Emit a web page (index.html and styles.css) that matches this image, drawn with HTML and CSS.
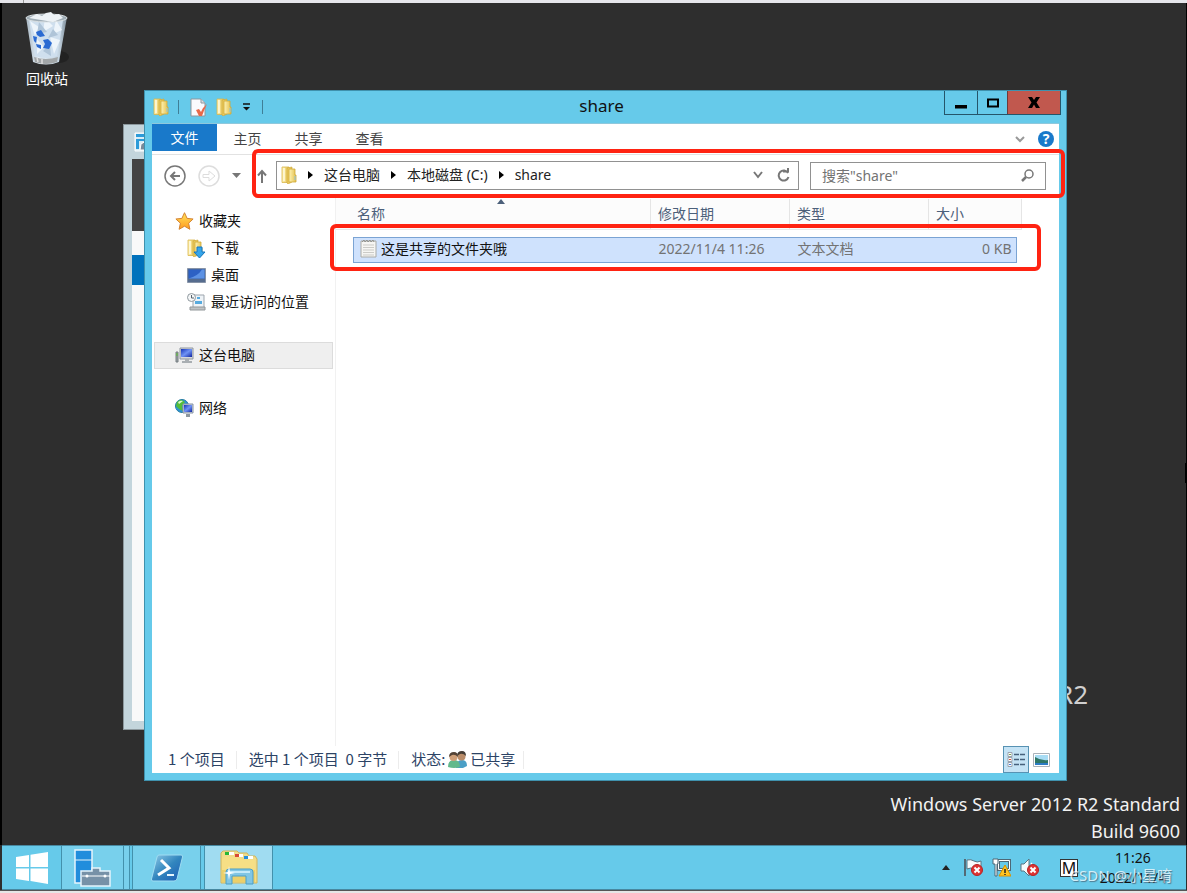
FILE: index.html
```html
<!DOCTYPE html>
<html lang="zh-CN">
<head>
<meta charset="utf-8">
<title>share</title>
<link rel="stylesheet" href="styles.css">
</head>
<body>
<svg class="defs" aria-hidden="true">
  <defs>
    <linearGradient id="gFolder" x1="0" x2="1"><stop offset="0" stop-color="#fff3b4"/><stop offset="1" stop-color="#e3c04e"/></linearGradient>
    <linearGradient id="gScreen" x1="0" y1="0" x2="1" y2="1"><stop offset="0" stop-color="#1533b8"/><stop offset=".5" stop-color="#6f93f5"/><stop offset="1" stop-color="#1024a0"/></linearGradient>
    <linearGradient id="gPs" x1="0" y1="0" x2="1" y2="1"><stop offset="0" stop-color="#8fcbe8"/><stop offset=".5" stop-color="#3286be"/><stop offset="1" stop-color="#1c59b4"/></linearGradient>
    <linearGradient id="gGlass" x1="0" x2="1"><stop offset="0" stop-color="#a9b8c4"/><stop offset=".3" stop-color="#e3edf5"/><stop offset=".8" stop-color="#c5d5e2"/><stop offset="1" stop-color="#7f8e9a"/></linearGradient>
    <linearGradient id="gStar" x1="0" y1="0" x2="0" y2="1"><stop offset="0" stop-color="#ffe45c"/><stop offset="1" stop-color="#ff9a1f"/></linearGradient>
    <symbol id="folder" viewBox="0 0 16 18">
      <path d="M1 1h7v15.500H1z" fill="url(#gFolder)" stroke="#d9b64c" stroke-width=".8"/>
      <path d="M6 2l5-1v15l-4 2-1-1z" fill="#e9c95c" stroke="#cda536" stroke-width=".6"/>
      <path d="M8 3h6v6h1v7H8z" fill="url(#gFolder)" stroke="#cfa937" stroke-width=".8"/>
      <path d="M3 2v13" stroke="#fffbe0" stroke-width="1.500"/><path d="M14 10v4" stroke="#8fc3dd" stroke-width="1"/>
    </symbol>
    <symbol id="badge" viewBox="0 0 12 12">
      <circle cx="6" cy="6" r="5.500" fill="#de3434" stroke="#b82222"/><path d="M3.500 3.500l5 5m0-5l-5 5" stroke="#fff" stroke-width="2"/>
    </symbol>
  </defs>
</svg>
<div class="topedge"></div>
<main class="desktop">
  <div class="bin">
    <svg width="44" height="54" viewBox="0 0 44 54" aria-hidden="true">
      <ellipse cx="34" cy="45" rx="10" ry="6" fill="#222"/>
      <path d="M1 5l7 45q13 5 26 0L42 5z" fill="url(#gGlass)"/>
      <path d="M4 8l6 36q12 4 22 0l6-36z" fill="#cfdfee"/>
      <path d="M5 9l9 6-4 9zM20 6l8 8-10 6zM31 8l6 10-9 4zM12 27l7 8-7 7zM25 25l10 3-6 14z" fill="#eef5fb"/>
      <path d="M14 10l8 10-10 2zM28 17l-5 9 10-3zM18 39l7-7 1 12z" fill="#afc4d8"/>
      <path d="M9 45q12 4 24 0l-1 5q-11 4-22 0z" fill="#a2a6a8"/>
      <path d="M12 46l1 4m4-3v5" stroke="#dedede" stroke-width="1.500"/>
      <ellipse cx="21.500" cy="6" rx="20.500" ry="4" fill="#9fadb6" stroke="#d9dfe2"/>
      <path d="M4 6l8-4 5 2 4-3 5-1 3 3 5-1 4 4-10 4-12-2z" fill="#edf2f6"/>
      <path d="M11 20l5-2 4 6-5 1-3-2zM8 24l4 1-1 6-2-2zM11 32l5 1v4l-4-2zM18 28l5-1 4 4-3 6-6-1 2-4z" fill="#2a6ad2"/>
    </svg>
    <span>回收站</span>
  </div>
  <div class="brand">R2</div>
  <div class="build"><span>Windows Server 2012 R2 Standard</span><span>Build 9600</span></div>
  <div class="edgemark"></div>

  <div class="backwin">
    <div class="back-title">
      <svg width="16" height="20" viewBox="0 0 16 20" aria-hidden="true"><path d="M1 1h15v18H1z" fill="#d8edf6" stroke="#fff"/><path d="M2 2h14v3H2zM2 7h14v2H5v8H2z" fill="#2c9bd8"/><path d="M7 12l5-3h4v9H6z" fill="#788a99" stroke="#fff"/></svg>
    </div>
    <div class="back-dark"></div><div class="back-gap"></div><div class="back-blue"></div><div class="back-body"></div>
  </div>

  <section class="window" aria-label="share">
    <header class="titlebar">
      <div class="quick">
        <svg width="16" height="18"><use href="#folder"/></svg>
        <i class="qsep"></i>
        <svg class="prop" width="18" height="19" viewBox="0 0 18 19" aria-hidden="true"><path d="M1 1h10l4 4v13H1z" fill="#fafafd" stroke="#8f979e"/><path d="M11 1v4h4" fill="#d9dee3" stroke="#8f979e"/><path d="M6 12l3-1 2 3q2-5 6-8-3 6-5 12H9z" fill="#e8694a"/></svg>
        <svg width="16" height="18"><use href="#folder"/></svg>
        <svg class="qmenu" width="9" height="8" viewBox="0 0 9 8" aria-hidden="true"><path d="M1 1h7" stroke="#111" stroke-width="1.500"/><path d="M1 4h7L4.500 7.500z" fill="#111"/></svg>
        <i class="qsep"></i>
      </div>
      <h1>share</h1>
      <div class="caption">
        <button class="cap-min" aria-label="最小化"><svg width="14" height="12" viewBox="0 0 14 12"><path d="M1 8h12v3.500H1z"/></svg></button>
        <button class="cap-max" aria-label="最大化"><svg width="12" height="10" viewBox="0 0 12 10"><path d="M1 1.500h10v7H1z" fill="none" stroke="#000" stroke-width="2"/></svg></button>
        <button class="cap-close" aria-label="关闭"><svg width="12" height="11" viewBox="0 0 12 11"><path d="M0 0h4l2 3 2-3h4L8.500 5.500 12 11H8L6 7.500 4 11H0l3.500-5.500z"/></svg></button>
      </div>
    </header>
    <div class="client">
      <nav class="tabs">
        <button class="tab file">文件</button><button class="tab">主页</button><button class="tab">共享</button><button class="tab">查看</button>
        <div class="tab-end">
          <svg width="10" height="7" viewBox="0 0 10 7" aria-hidden="true"><path d="M1 1l4 4 4-4" fill="none" stroke="#999" stroke-width="2"/></svg>
          <button class="help" aria-label="帮助">?</button>
        </div>
      </nav>
      <div class="navrow">
        <div class="arrows">
          <svg width="22" height="22" viewBox="0 0 22 22" aria-hidden="true"><circle cx="11" cy="11" r="10" fill="#fff" stroke="#777" stroke-width="1.500"/><path d="M16 11H7m4-4l-4 4 4 4" fill="none" stroke="#777" stroke-width="2"/></svg>
          <svg width="22" height="22" viewBox="0 0 22 22" aria-hidden="true"><circle cx="11" cy="11" r="10" fill="#fff" stroke="#ddd" stroke-width="1.500"/><path d="M5 9.500h6V6l6 5-6 5v-3.500H5z" fill="none" stroke="#ddd"/></svg>
          <svg width="9" height="5" viewBox="0 0 9 5" aria-hidden="true"><path d="M0 0h9L4.500 5z" fill="#777"/></svg>
          <svg width="10" height="14" viewBox="0 0 10 14" aria-hidden="true"><path d="M5 14V2M1 6.500L5 2l4 4.500" fill="none" stroke="#777" stroke-width="2"/></svg>
        </div>
        <div class="address">
          <svg width="16" height="18"><use href="#folder"/></svg>
          <svg width="5" height="8" viewBox="0 0 5 8"><path d="M0 0l5 4-5 4z"/></svg><span>这台电脑</span>
          <svg width="5" height="8" viewBox="0 0 5 8"><path d="M0 0l5 4-5 4z"/></svg><span>本地磁盘 (C:)</span>
          <svg width="5" height="8" viewBox="0 0 5 8"><path d="M0 0l5 4-5 4z"/></svg><span>share</span>
          <svg class="addr-drop" width="10" height="8" viewBox="0 0 10 8"><path d="M1 1l4 5 4-5" fill="none" stroke="#777" stroke-width="2"/></svg>
          <svg width="13" height="14" viewBox="0 0 13 14"><path d="M11 5a5 5 0 1 0 .5 4M6 3.500h5V0" fill="none" stroke="#777" stroke-width="2"/></svg>
        </div>
        <label class="search">
          <input type="text" aria-label="搜索" value="搜索&quot;share&quot;">
          <svg width="13" height="13" viewBox="0 0 13 13" aria-hidden="true"><circle cx="8" cy="5" r="4" fill="none" stroke="#777" stroke-width="1.500"/><path d="M5 8L1 12" stroke="#777" stroke-width="2.500"/></svg>
        </label>
      </div>
      <div class="content">
        <aside class="side">
          <div class="group">
            <a class="root" href="#"><svg width="19" height="18" viewBox="0 0 19 18"><path d="M9.500.7l2.600 5.700 6 .6-4.500 4.200 1.300 6.100-5.400-3.100-5.400 3.100 1.300-6.100L.9 7l6-.6z" fill="url(#gStar)" stroke="#d48330"/></svg>收藏夹</a>
            <a href="#"><svg width="19" height="19" viewBox="0 0 19 19"><use href="#folder" width="16" height="18"/><path d="M10 8h5v5h3l-5.500 6L7 13h3z" fill="#35a5ea" stroke="#1677bd"/></svg>下载</a>
            <a href="#"><svg width="19" height="15" viewBox="0 0 19 15"><path d="M.5.500h18v14H.5z" fill="#566c8e" stroke="#8794a8"/><path d="M1.500 1.500h16v9h-16z" fill="#2d61c4"/><path d="M1.500 10.500Q11 8 15 1.500h2.500v9z" fill="#5d92e4"/></svg>桌面</a>
            <a href="#"><svg width="19" height="18" viewBox="0 0 19 18"><path d="M6 2h11v14H6z" fill="#eef3f7" stroke="#9da5ad"/><path d="M3 14h15v3H3z" fill="#bfc3c5" stroke="#92979a"/><path d="M10 4h3v2h-3zM8 8h7v3H8z" fill="#56aade"/><circle cx="4.500" cy="4.500" r="4" fill="#f4f6f7" stroke="#8f989e"/><path d="M4.500 2v3H7" fill="none" stroke="#59636b"/></svg>最近访问的位置</a>
          </div>
          <div class="group">
            <a class="root selected" href="#"><svg width="19" height="17" viewBox="0 0 19 17"><path d="M1 5h2v10H1z" fill="#9aa2a6" stroke="#777e82"/><path d="M2 6v3" stroke="#57c12e"/><path d="M5 1h13v11H5z" fill="#d4d7dc" stroke="#8f969f"/><path d="M6 2h11v8H6z" fill="url(#gScreen)"/><path d="M10 12h4v2h3v2H7v-2h3z" fill="#a9aeb2"/></svg>这台电脑</a>
          </div>
          <div class="group">
            <a class="root" href="#"><svg width="19" height="19" viewBox="0 0 19 19"><circle cx="7" cy="7" r="6.500" fill="#2d93d7" stroke="#247b9f"/><path d="M2 3q4-4 8 0L7 7l1 5-4-2-3-3z" fill="#54bd39"/><path d="M3 3q3-2 5-1L4 5z" fill="#ddf8d0"/><path d="M8 5h10v9H8z" fill="#c9d1dc" stroke="#8793a3"/><path d="M9 6h8v7H9z" fill="url(#gScreen)"/><path d="M11 15h4v3h-4z" fill="#8d979f"/></svg>网络</a>
          </div>
        </aside>
        <div class="files">
          <table>
            <colgroup><col><col class="c-date"><col class="c-type"><col class="c-size"></colgroup>
            <thead><tr><th>名称<i class="sort"></i></th><th>修改日期</th><th>类型</th><th>大小</th></tr></thead>
            <tbody><tr>
              <td><div class="cell first"><svg width="17" height="19" viewBox="0 0 17 19"><path d="M1 2h15v16H1z" fill="#f6f6f3" stroke="#a9aaa6"/><path d="M3 6h11M3 8.500h11M3 11h11M3 13.500h11M3 16h11" stroke="#cbcbc7"/><path d="M2 3l2-2 1 2 2-2 1 2 2-2 1 2 2-2 1 2" fill="none" stroke="#93948f"/></svg>这是共享的文件夹哦</div></td>
              <td><div class="cell">2022/11/4 11:26</div></td>
              <td><div class="cell">文本文档</div></td>
              <td><div class="cell last">0 KB</div></td>
            </tr></tbody>
          </table>
        </div>
      </div>
      <footer class="status">
        <span>1 个项目</span><span>选中 1 个项目&nbsp; 0 字节</span>
        <span class="shared">状态:<svg width="19" height="17" viewBox="0 0 19 17"><path d="M8 17q0-8 6-8 5 0 5 6l-4 2z" fill="#4a9fc6"/><circle cx="13.500" cy="5.500" r="4" fill="#b98c69"/><path d="M9 5q0-5 5-5 4 0 4 5-3-3-6-2z" fill="#443c35"/><path d="M0 16q0-7 6-7t6 7q-6 2-12 0z" fill="#62b98c"/><circle cx="5.500" cy="6" r="4" fill="#cf9f78"/><path d="M1 6q0-5 5-5 4 0 4 5-3-3-6-2z" fill="#544336"/></svg>已共享</span>
        <div class="views">
          <button class="on" aria-label="详细信息"><svg width="19" height="16" viewBox="0 0 19 16"><g fill="#fff" stroke="#9aa3ae"><path d="M1 .500h4v4H1zM1 5.500h4v4H1zM1 10.500h4v4H1z"/></g><path d="M2 7h2v1H2z" fill="#e0523c"/><path d="M2 12h2v1H2z" fill="#3f7be0"/><path d="M2 2h2v1H2z" fill="#79a04f"/><path d="M7 2.500h5m1 0h5M7 7.500h5m1 0h5M7 12.500h5m1 0h5" stroke="#47617c" stroke-width="1.500"/></svg></button>
          <button aria-label="大图标"><svg width="17" height="14" viewBox="0 0 17 14"><path d="M.5.500h16v13H.5z" fill="#fff" stroke="#a9b1b9"/><path d="M2 2h13v10H2z" fill="#a8dcf4"/><path d="M2 4q6 4 13 3v3H2z" fill="#2e7666"/><path d="M2 10h13v2H2z" fill="#2c7cc5"/></svg></button>
        </div>
      </footer>
    </div>
    <div class="mark mark-address"></div>
    <div class="mark mark-file"></div>
  </section>
</main>
<footer class="taskbar">
  <button class="start" aria-label="开始"><svg width="32" height="32" viewBox="0 0 32 32"><path d="M0 5l13-2v12H0zM14.500 2.700L32 0v15H14.500zM0 16.500h13V29L0 27zM14.500 16.500H32V32l-17.500-3z" fill="#fff"/></svg></button>
  <button class="task server" aria-label="服务器管理器"><svg width="38" height="38" viewBox="0 0 38 38"><path d="M1 1h17v33H1z" fill="#218ddc" stroke="#e5f4fb" stroke-width="1.500"/><path d="M1 11h17" stroke="#e5f4fb"/><path d="M18 22v-3h8v3h10v15H7V22z" fill="#7791a7" stroke="#e5f4fb" stroke-width="1.500"/><path d="M8 27h28" stroke="#fff"/><circle cx="13" cy="27" r="1.500" fill="#fff"/><circle cx="31" cy="27" r="1.500" fill="#fff"/></svg></button>
  <i class="stack"></i>
  <button class="task" aria-label="PowerShell"><svg width="32" height="28" viewBox="0 0 32 28"><path d="M8 1h22q2 0 1.500 2L26 25q-1 2-3 2H2q-2 0-1.500-2L6 3q.5-2 2-2z" fill="url(#gPs)" stroke="#9fdcf2"/><path d="M10 6l8 8-11 7" fill="none" stroke="#fff" stroke-width="3"/><path d="M16 21h7" stroke="#e7f5fc" stroke-width="2"/></svg></button>
  <button class="task active" aria-label="文件资源管理器"><svg width="38" height="35" viewBox="0 0 38 35"><path d="M1 3l2-2h14l2 2h8l2 3h6l2 3v24H1z" fill="#f0dc8a" stroke="#d3b65a"/><path d="M5 2h9v3H5zM15 4h8v3h-8zM24 6h9v3h-9z" fill="#fff"/><path d="M5 2h4v3H5z" fill="#28b735"/><path d="M15 4h4v3h-4z" fill="#d84a35"/><path d="M24 6h4v3h-4z" fill="#248edc"/><path d="M2 9l3-2h15l3 3h12v22H2z" fill="#f6df85"/><path d="M2 20h33v12H2z" fill="#ecd06a"/><path d="M6 34V22q0-3 3-3h21q3 0 3 3v12h-7v-8H12v8z" fill="#80c6e5" stroke="#4a9fc7"/><path d="M8 22h22" stroke="#c4eafa" fill="none" stroke-width="2"/><path d="M9 16l1 6 5 1-5 1-1 6-1-6-5-1 5-1z" fill="#fff"/></svg></button>
  <div class="tray">
    <svg width="8" height="5" viewBox="0 0 8 5"><path d="M0 5l4-5 4 5z" fill="#222"/></svg>
    <svg width="19" height="19" viewBox="0 0 19 19"><path d="M1 1v17" stroke="#536a76" stroke-width="2"/><path d="M3 2q4-1 7 1t7 0v9q-4 1-7-1t-7 0z" fill="#f7fbfd" stroke="#5a7582"/><use href="#badge" x="7" y="6" width="12" height="12"/></svg>
    <svg width="19" height="19" viewBox="0 0 19 19"><path d="M6.500 2.500h11v9h-11z" fill="#66caea" stroke="#4d6876" stroke-width="3"/><path d="M6.500 2.500h11v9h-11z" fill="none" stroke="#fff"/><path d="M1 1h5v5H5v12H3V6H1z" fill="#fff" stroke="#4d6876"/><path d="M13 7l6 11H7z" fill="#ffc41e" stroke="#d79200"/><path d="M13 11v4m0 1v1" stroke="#222" stroke-width="1.500"/></svg>
    <svg width="19" height="19" viewBox="0 0 19 19"><path d="M1 6h3l5-5v17l-5-5H1z" fill="#f7fbfd" stroke="#5a7582"/><path d="M11 5q2 2 2 5" fill="none" stroke="#fff" stroke-width="1.500"/><use href="#badge" x="7" y="6" width="12" height="12"/></svg>
    <span class="ime">M</span>
    <div class="clock"><span>11:26</span><span>2022/11/4</span></div>
  </div>
  <div class="watermark">CSDN @小星唷</div>
</footer>
<div class="bottomedge"></div>
</body>
</html>
```
FILE: styles.css
```css
* { box-sizing: border-box; }
body {
  margin: 0;
  min-height: 100vh;
  display: flex;
  flex-direction: column;
  background: #2e2e2e;
  font: 14px/20px "Noto Sans", "Noto Sans CJK SC", sans-serif;
  color: #111;
  overflow: hidden;
}
svg { display: block; flex: none; }
button { margin: 0; padding: 0; border: 0; background: none; font: inherit; color: inherit; }
a { color: inherit; text-decoration: none; }
.defs { position: absolute; width: 0; height: 0; }
.topedge { height: 3px; padding-left: 23px; background: #e6e6eb; }
.topedge::before { content: ""; display: block; width: 1px; height: 3px; background: #999; }
.bottomedge { height: 3px; background: #e6e6e6; border-top: 1px solid #555; }
.desktop { flex: 1; position: relative; border-left: 2px solid #000; border-right: 1px solid #000; }

.bin { display: flex; flex-direction: column; align-items: center; gap: 3px; width: 90px; padding-top: 9px; color: #fff; }
.brand { position: absolute; right: 98px; bottom: 131px; font-size: 26px; line-height: 40px; color: #d0d0d0; }
.build { position: absolute; right: 6px; bottom: 0; display: flex; flex-direction: column; align-items: flex-end; font-size: 18px; line-height: 27px; color: #f2f2f2; }
.edgemark { position: absolute; right: 0; top: 460px; width: 1px; height: 20px; background: #000; }

.backwin { position: absolute; left: 121px; top: 121px; bottom: 115px; width: 60px; display: flex; flex-direction: column; padding: 0 0 8px 8px; background: #c3d5dc; border: 1px solid #8c989d; }
.back-title { height: 34px; padding: 7px 0 0 2px; }
.back-dark { height: 72px; background: #434343; }
.back-gap { height: 24px; background: #f9f9f9; }
.back-blue { height: 30px; background: #0072bc; }
.back-body { flex: 1; background: #f9f9f9; }

.window { position: absolute; left: 142px; right: 119px; top: 87px; bottom: 64px; display: flex; flex-direction: column; padding: 0 7px 7px; background: #66caea; border: 1px solid #3f91ad; }
.titlebar { height: 32px; display: grid; grid-template-columns: 1fr auto 1fr; }
.quick { display: flex; align-items: center; gap: 8px; padding-left: 1px; }
.qsep { width: 1px; height: 14px; margin: 0 2px 0 1px; background: #3f7f97; }
.prop { margin-left: 1px; }
.qmenu { margin: 0 2px; }
h1 { margin: 0; padding-right: 8px; font-size: 17px; line-height: 30px; font-weight: 400; }
.caption { justify-self: end; display: flex; height: 24px; margin-right: -2px; border: 1px solid #25556a; border-top: 0; }
.caption button { display: flex; align-items: center; justify-content: center; width: 32px; }
.caption .cap-max { width: 30px; border-left: 1px solid #25556a; }
.caption .cap-close { width: 53px; background: #c1584e; border-left: 1px solid #6d3a3a; }

.client { flex: 1; min-height: 0; display: flex; flex-direction: column; background: #fff; border-top: 1px solid #8fc8dc; }
.tabs { display: flex; height: 31px; border-bottom: 1px solid #e2e2e2; color: #444; }
.tab { width: 61px; height: 30px; }
.file { width: 65px; height: 27px; background: #1979ca; color: #fff; }
.tab-end { margin-left: auto; display: flex; align-items: center; gap: 13px; padding-right: 5px; }
.help { width: 16px; height: 16px; border-radius: 50%; background: #1979ca; color: #fff; font-weight: 700; line-height: 16px; }

.navrow { display: flex; align-items: center; height: 41px; padding: 0 13px 0 12px; }
.arrows { display: flex; align-items: center; width: 112px; gap: 12px; }
.arrows svg:last-child { margin-left: 4px; }
.address { flex: 1; display: flex; align-items: center; gap: 11px; height: 29px; padding: 0 8px 2px 4px; border: 1px solid #919191; color: #222; }
.address .addr-drop { margin: 0 3px 0 auto; }
.search { display: flex; align-items: center; width: 236px; height: 28px; margin-left: 11px; padding: 0 11px; border: 1px solid #919191; }
.search input { flex: 1; min-width: 0; padding: 0; border: 0; outline: 0; background: none; font: inherit; color: #737373; }

.content { flex: 1; min-height: 0; display: flex; }
.side { width: 184px; padding: 12px 2px 0; display: flex; flex-direction: column; gap: 26px; border-right: 1px solid #f1f1f1; }
.group { display: flex; flex-direction: column; }
.side a { display: flex; align-items: center; gap: 5px; height: 27px; padding: 0 0 1px 33px; color: #111; }
.side .root { padding-left: 21px; }
.side .selected { background: #efefef; border: 1px solid #dcdcdc; padding-left: 20px; }

.files { flex: 1; padding: 3px 37px 0 0; }
table { width: 100%; table-layout: fixed; border-collapse: collapse; }
.c-date, .c-type { width: 139px; }
.c-size { width: 93px; }
th { position: relative; height: 30px; padding: 0 0 0 7px; font-weight: 400; text-align: left; color: #4c607a; background: #fcfcfc; border-right: 1px solid #e5e5e5; border-bottom: 1px solid #e8e8e8; }
th:first-child { padding-left: 21px; }
.sort { position: absolute; left: 161px; top: 0; border: 4px solid transparent; border-top: 0; border-bottom: 5px solid #4c607a; }
td { padding: 7px 0 0; color: #737373; }
.cell { height: 26px; display: flex; align-items: center; padding: 0 0 2px 8px; background: #cfe2fd; border: solid #7ba4d4; border-width: 1px 0; }
.first { margin-left: 17px; padding-left: 6px; gap: 4px; border-left-width: 1px; color: #111; }
.last { margin-right: 5px; padding-right: 4px; justify-content: flex-end; border-right-width: 1px; }

.status { display: flex; align-items: center; height: 27px; padding: 0 8px 0 4px; font: 15px/16px "Noto Sans CJK SC", sans-serif; color: #2c4365; }
.status > span { height: 18px; line-height: 16px; padding: 0 11px 2px 12px; border-right: 1px solid #ececec; }
.status .shared { display: flex; gap: 3px; padding-right: 8px; }
.views { margin-left: auto; display: flex; align-items: center; gap: 3px; }
.views button { height: 27px; padding: 0 1px; display: flex; align-items: center; }
.views .on { width: 26px; padding: 0 3px; background: #c5e3f5; border: 1px solid #5792b3; }

.mark { position: absolute; border: 4px solid #ff2312; border-radius: 6px; pointer-events: none; }
.mark-address { left: 107px; right: 1px; top: 58px; height: 49px; }
.mark-file { left: 185px; right: 25px; top: 133px; height: 47px; }

.taskbar { position: relative; display: flex; height: 45px; margin: 0 1px 0 2px; background: #66caea; border: 1px solid #4788a0; border-width: 1px 0; }
.taskbar button { display: flex; align-items: center; justify-content: center; }
.start { width: 59px; }
.task { width: 69px; margin-right: 3px; background: #78d0ec; border: 1px solid #4391ac; border-width: 0 1px; }
.taskbar .server { width: 63px; margin: 0; }
.stack { width: 6px; margin-right: 2px; background: #78d0ec; border-right: 1px solid #4391ac; }
.taskbar .active { background: #a0dcf1; }
.tray { margin-left: auto; display: flex; align-items: center; gap: 9px; }
.tray svg:first-child { margin-right: 5px; }
.ime { width: 18px; height: 18px; margin-left: 12px; background: #fff; border: 1px solid #333; text-align: center; line-height: 16px; font-size: 16px; }
.clock { display: flex; flex-direction: column; align-items: center; width: 106px; margin-left: -7px; }
.watermark { position: absolute; right: 14px; bottom: 4px; color: #fff; opacity: .7; font-size: 15px; text-shadow: 1px 1px 1px #456; }
```
